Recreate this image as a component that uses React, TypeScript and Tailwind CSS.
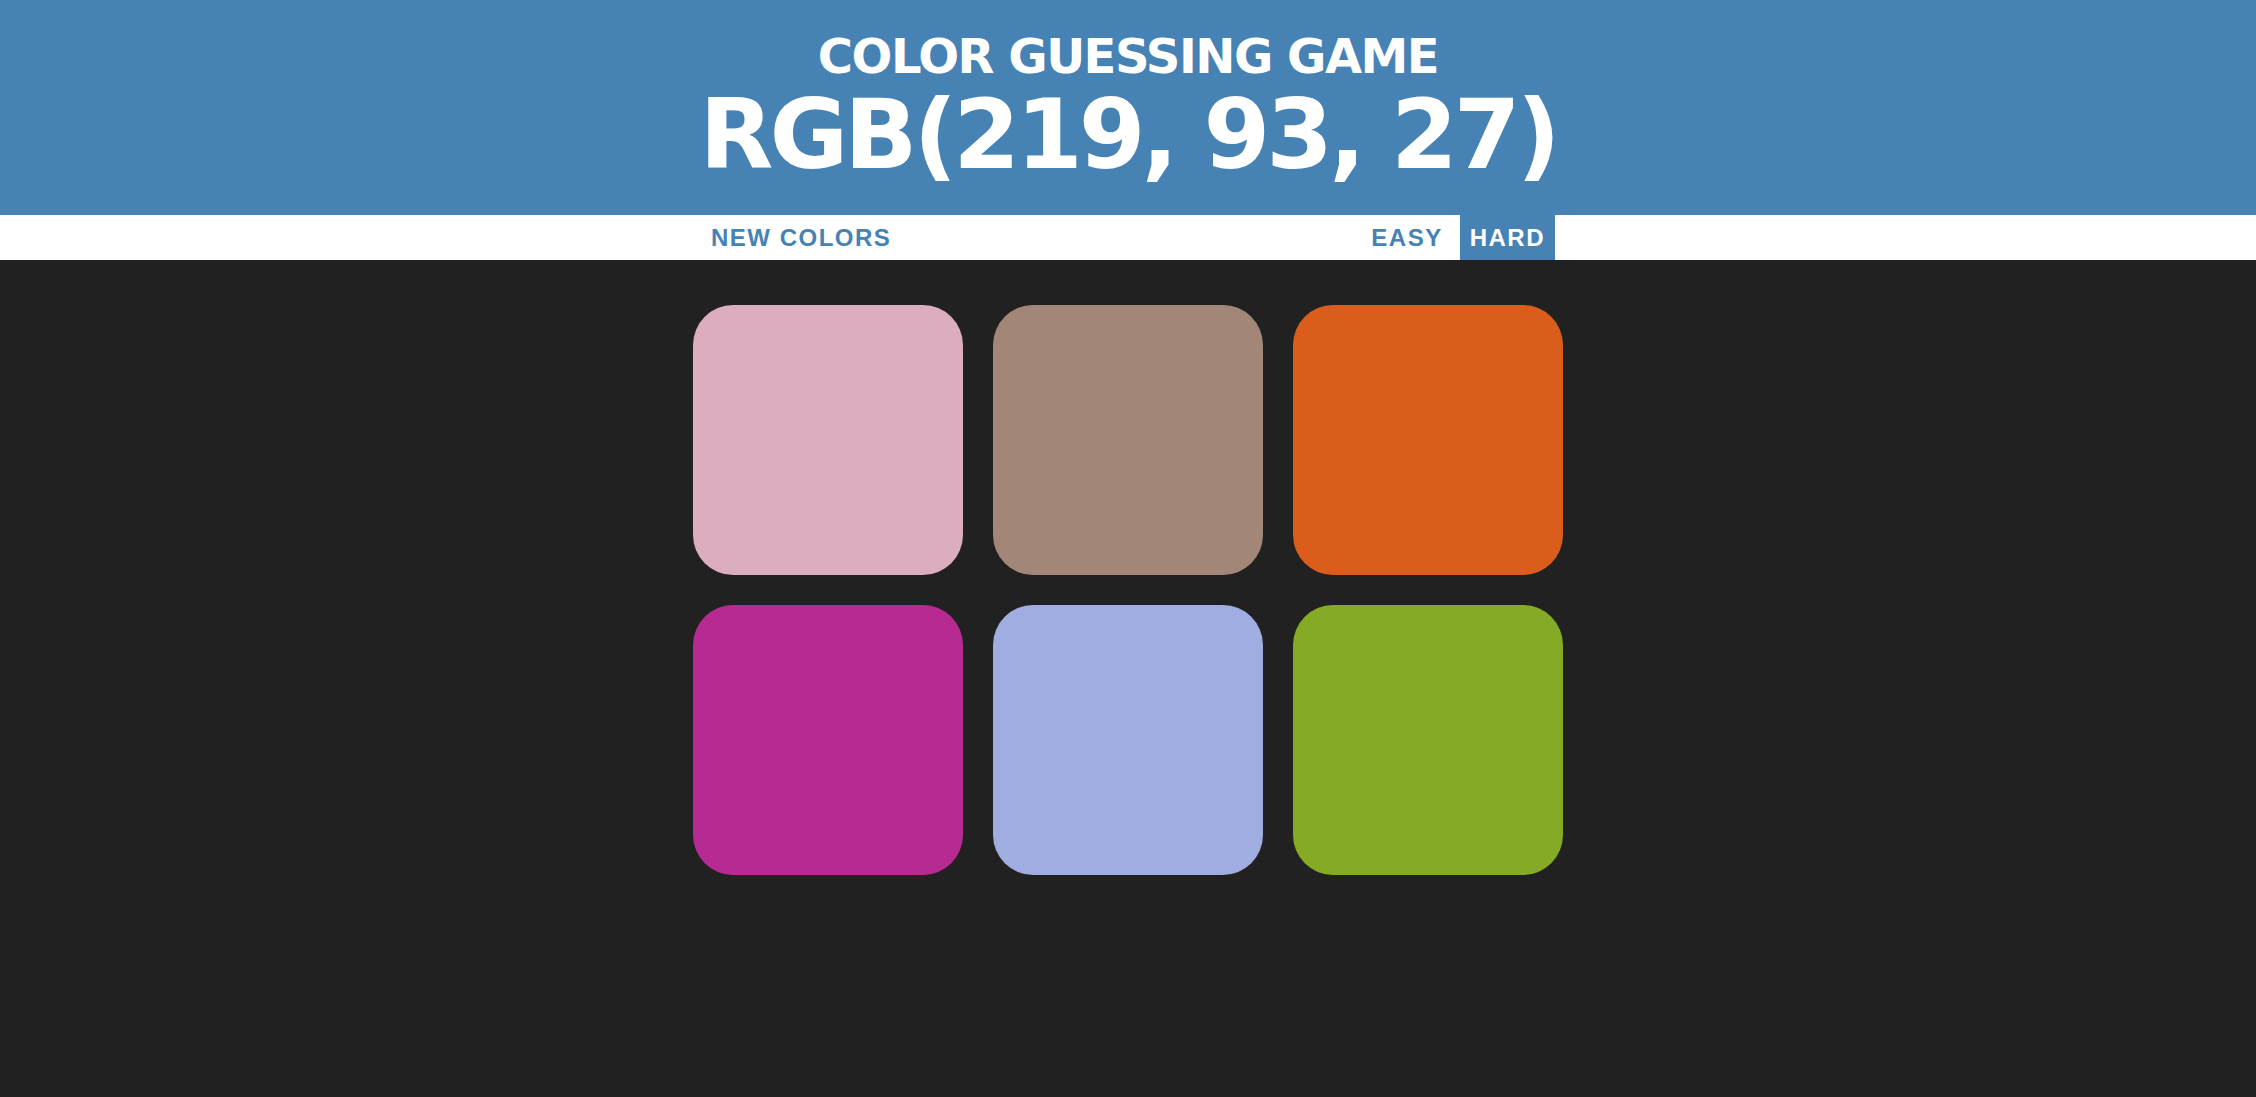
const squares = [
  "#dcacbf",
  "#a28779",
  "#db5d1b",
  "#b62a92",
  "#a0ade0",
  "#85aa25",
];

export default function App() {
  return (
    <div className="min-h-screen bg-[#212121]">
      {/* Header */}
      <h1 className="bg-[#4682b4] pt-[30px] pb-[27px] text-center uppercase text-white font-bold font-['DejaVu_Sans',Verdana,sans-serif]">
        <span className="block text-[48px] leading-[1.1] tracking-[-1.5px]">Color Guessing Game</span>
        <span className="block text-[96px] leading-[1.1] tracking-[-4px]">RGB(219, 93, 27)</span>
      </h1>

      {/* Stripe */}
      <div className="bg-white h-[45px] font-['Liberation_Sans',Arial,sans-serif]">
        <div className="w-[854px] mx-auto h-full flex justify-between">
          <button className="h-full px-[10px] text-[24px] font-bold uppercase tracking-[1.5px] text-[#4682b4]">
            New Colors
          </button>
          <div className="h-full flex gap-[7px]">
            <button className="h-full px-[10px] text-[24px] font-bold uppercase tracking-[1.5px] text-[#4682b4]">
              Easy
            </button>
            <button className="h-full px-[10px] text-[24px] font-bold uppercase tracking-[1.5px] text-white bg-[#4682b4]">
              Hard
            </button>
          </div>
        </div>
      </div>

      {/* Squares */}
      <div className="w-[900px] mx-auto mt-[30px] grid grid-cols-3">
        {squares.map((c, i) => (
          <div key={i} className="m-[15px] w-[270px] h-[270px] rounded-[40px]" style={{ backgroundColor: c }} />
        ))}
      </div>
    </div>
  );
}
